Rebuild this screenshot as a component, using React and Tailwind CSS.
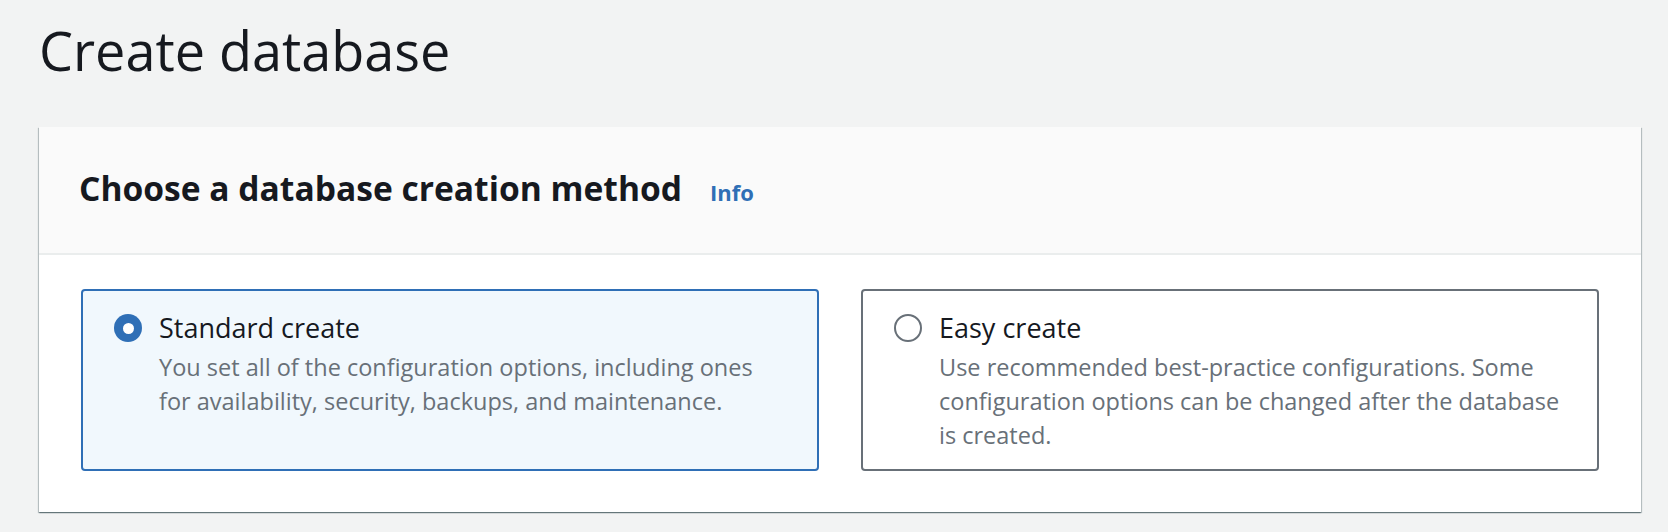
import React, { useState } from 'react';

const options = [
  {
    id: 'standard',
    title: 'Standard create',
    lines: [
      'You set all of the configuration options, including ones',
      'for availability, security, backups, and maintenance.',
    ],
  },
  {
    id: 'easy',
    title: 'Easy create',
    lines: [
      'Use recommended best-practice configurations. Some',
      'configuration options can be changed after the database',
      'is created.',
    ],
  },
];

const Radio = ({ checked }) =>
  checked ? (
    <span className="w-[28px] h-[28px] rounded-full bg-[#2f6fb6] flex items-center justify-center">
      <span className="w-[11px] h-[11px] rounded-full bg-white" />
    </span>
  ) : (
    <span className="w-[28px] h-[28px] rounded-full border-2 border-[#687078] bg-white" />
  );

const App = () => {
  const [method, setMethod] = useState('standard');

  return (
    <div className="w-full h-[532px] bg-[#f2f3f3] pl-[39px] pr-[27px] pt-[18px] font-['Open_Sans',sans-serif] text-[#16191f] overflow-hidden">
      <h1 className="text-[54px] leading-[64px] font-normal">Create database</h1>

      <div className="mt-[45px] bg-white shadow-[0_1px_1px_0_rgba(0,28,36,0.35),1px_1px_1px_0_rgba(0,28,36,0.2),-1px_1px_1px_0_rgba(0,28,36,0.2)]">
        {/* header */}
        <div className="h-[128px] bg-[#fafafa] border-b-2 border-[#eaeded] px-[40px] pt-[40px]">
          <div className="flex items-baseline">
            <h2 className="text-[33.6px] leading-[42px] font-bold">Choose a database creation method</h2>
            <a href="#" className="ml-[28px] text-[22px] font-bold text-[#2f6fb6]">Info</a>
          </div>
        </div>

        {/* body */}
        <div className="grid grid-cols-2 gap-[42px] pt-[34px] pb-[41px] px-[42px]">
          {options.map(opt => {
            const checked = method === opt.id;
            return (
              <div
                key={opt.id}
                onClick={() => setMethod(opt.id)}
                className={
                  checked
                    ? 'h-[182px] rounded-[4px] border-2 border-[#2f6fb6] bg-[#f1f8fd] pl-[31px] pt-[20px] flex gap-[17px] cursor-pointer'
                    : 'h-[182px] rounded-[4px] border-2 border-[#687078] bg-white pl-[31px] pt-[20px] flex gap-[17px] cursor-pointer'
                }
              >
                <div className="h-[34px] flex items-center shrink-0">
                  <Radio checked={checked} />
                </div>
                <div>
                  <div className="text-[27px] leading-[34px]">{opt.title}</div>
                  <div className="mt-[5px] text-[23.5px] leading-[34px] text-[#687078]">
                    {opt.lines.map((l, i) => (
                      <div key={i}>{l}</div>
                    ))}
                  </div>
                </div>
              </div>
            );
          })}
        </div>
      </div>
    </div>
  );
};

export default App;
